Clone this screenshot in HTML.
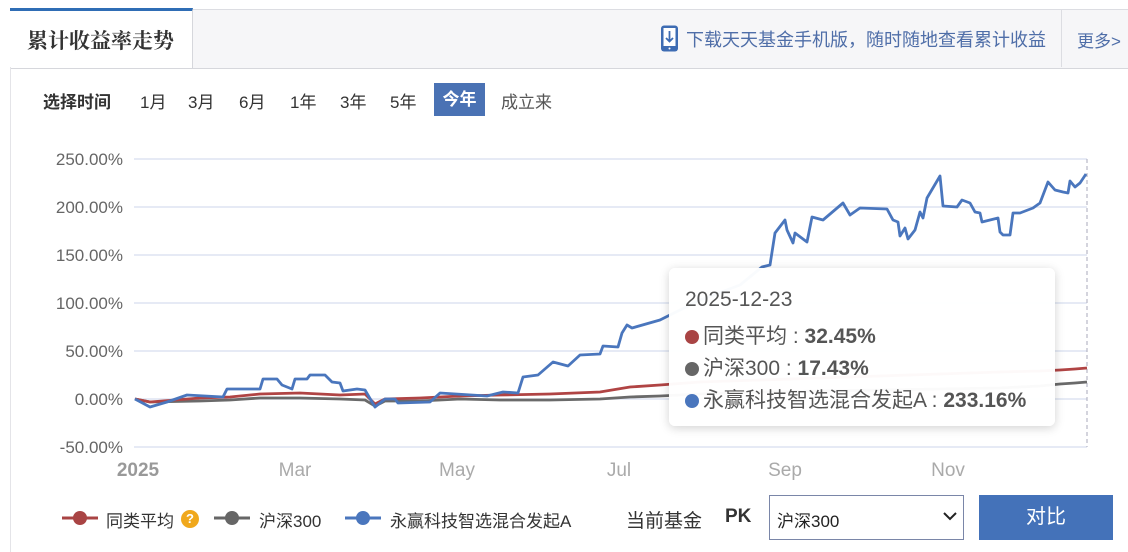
<!DOCTYPE html>
<html><head><meta charset="utf-8"><style>
body{margin:0;width:1128px;height:552px;background:#fff;font-family:"Liberation Sans","Noto Sans CJK SC",sans-serif;position:relative;overflow:hidden}
.a{position:absolute;white-space:nowrap}
.d{display:inline-block;width:14px;height:14px;border-radius:50%;margin-right:4px;vertical-align:-1px}
</style></head><body>
<div class="a" style="left:10px;top:9px;width:1118px;height:58px;background:#f6f6f8;border-top:1px solid #dcdde2;border-bottom:1px solid #d6d7dc"></div>
<div class="a" style="left:10px;top:8px;width:183px;height:60px;background:#fff;border-top:3px solid #2f6db5;border-right:1px solid #d6d7dc;box-sizing:border-box"></div>
<div class="a" style="left:10px;top:67px;width:1px;height:485px;background:#e4e4e8"></div>
<div class="a" style="left:27px;top:25px;font-size:21px;color:#333;font-family:'Noto Serif CJK SC',serif;font-weight:700">累计收益率走势</div>
<svg class="a" style="left:660px;top:25px" width="19" height="27" viewBox="0 0 19 27"><rect x="1" y="0.5" width="17" height="26" rx="3" fill="#3e6cb3"/><rect x="3.5" y="3" width="12" height="18" fill="#fff"/><path d="M9.5 6v10M6 13l3.5 3.5L13 13" stroke="#3e6cb3" stroke-width="1.8" fill="none"/><circle cx="9.5" cy="23.5" r="1" fill="#fff"/></svg>
<div class="a" style="left:686px;top:26px;font-size:18px;color:#4f6ea8">下载天天基金手机版，随时随地查看累计收益</div>
<div class="a" style="left:1061px;top:9px;width:1px;height:58px;background:#dcdde2"></div>
<div class="a" style="left:1077px;top:27px;font-size:17px;color:#4f6ea8">更多&gt;</div>
<div class="a" style="left:43px;top:88px;font-size:17px;color:#333;font-weight:bold">选择时间</div>
<div class="a" style="left:140px;top:88px;font-size:17px;color:#333">1月</div>
<div class="a" style="left:188px;top:88px;font-size:17px;color:#333">3月</div>
<div class="a" style="left:239px;top:88px;font-size:17px;color:#333">6月</div>
<div class="a" style="left:290px;top:88px;font-size:17px;color:#333">1年</div>
<div class="a" style="left:340px;top:88px;font-size:17px;color:#333">3年</div>
<div class="a" style="left:390px;top:88px;font-size:17px;color:#333">5年</div>
<div class="a" style="left:434px;top:83px;width:51px;height:33px;background:#4a72b4;color:#fff;font-size:17px;line-height:33px;text-align:center;font-weight:bold">今年</div>
<div class="a" style="left:501px;top:88px;font-size:17px;color:#555">成立来</div>
<svg class="a" style="left:0;top:140px" width="1128" height="345" viewBox="0 140 1128 345">
<g stroke="#dde4f2" stroke-width="1.5"><line x1="134" x2="1087" y1="159" y2="159"/><line x1="134" x2="1087" y1="207" y2="207"/><line x1="134" x2="1087" y1="255" y2="255"/><line x1="134" x2="1087" y1="303" y2="303"/><line x1="134" x2="1087" y1="351" y2="351"/><line x1="134" x2="1087" y1="399" y2="399"/><line x1="134" x2="1087" y1="447" y2="447"/></g>
<g font-size="17" fill="#666" text-anchor="end" font-family="Liberation Sans,sans-serif"><text x="123" y="165">250.00%</text><text x="123" y="213">200.00%</text><text x="123" y="261">150.00%</text><text x="123" y="309">100.00%</text><text x="123" y="357">50.00%</text><text x="123" y="405">0.00%</text><text x="123" y="453">-50.00%</text></g>
<g font-size="19" fill="#aaa" text-anchor="middle" font-family="Liberation Sans,sans-serif"><text x="138" y="476" font-weight="bold" fill="#999">2025</text><text x="295" y="476">Mar</text><text x="457" y="476">May</text><text x="619" y="476">Jul</text><text x="785" y="476">Sep</text><text x="948" y="476">Nov</text></g>
<line x1="1087" y1="159" x2="1087" y2="447" stroke="#aab" stroke-dasharray="4,3"/>
<polyline fill="none" stroke="#6a6a6a" stroke-width="2.8" points="135,399 150,402 200,401 230,400 260,398 300,398 340,399 365,400 375,406 385,401 420,401 460,399 500,400 550,400 600,399 630,397 660,396 700,394 760,392 820,391 880,390 940,389 1000,388 1040,386 1060,384 1075,383 1087,382"/>
<polyline fill="none" stroke="#b04444" stroke-width="2.8" points="135,399 150,402 200,398 230,397 260,394 300,393 340,395 365,394 375,404 385,399 420,398 460,396 500,395 550,394 600,392 630,387 660,385 700,382 760,380 820,378 880,376 940,374 1000,372 1040,371 1060,370 1075,369 1087,368"/>
<polyline fill="none" stroke="#4a76bd" stroke-width="2.8" stroke-linejoin="round" points="135,399 150,407 167,402 187,395 223,397 227,389 260,389 263,379 277,379 282,385 292,389 295,379 307,379 310,375 325,375 332,382 340,383 343,391 357,389 365,390 375,407 385,399 395,399 398,403 430,402 440,393 487,396 503,392 518,393 523,377 538,375 553,362 568,366 580,355 600,354 603,346 618,347 622,333 627,325 632,328 660,320 700,300 740,285 762,267 770,265 775,233 785,220 787,230 793,243 795,233 807,242 812,217 823,220 843,203 850,215 860,208 887,209 893,220 898,222 900,236 905,228 908,239 915,230 920,212 923,218 927,198 940,176 943,206 957,207 962,200 970,203 975,212 980,213 982,222 998,218 1000,232 1003,235 1010,235 1013,213 1020,213 1033,208 1040,203 1048,182 1055,190 1063,192 1068,193 1070,181 1075,187 1080,183 1086,174"/>
</svg>
<div class="a" style="left:669px;top:268px;width:386px;height:158px;background:rgba(255,255,255,0.97);border-radius:6px;box-shadow:0 2px 10px rgba(0,0,0,0.18)"></div>
<div class="a" style="left:685px;top:288px;font-size:21px;color:#555">2025-12-23</div>
<div class="a" style="left:685px;top:320px;font-size:21px;color:#555"><span class="d" style="background:#a94444"></span>同类平均 : <b>32.45%</b></div>
<div class="a" style="left:685px;top:352px;font-size:21px;color:#555"><span class="d" style="background:#666"></span>沪深300 : <b>17.43%</b></div>
<div class="a" style="left:685px;top:384px;font-size:21px;color:#555"><span class="d" style="background:#4a76bd"></span>永赢科技智选混合发起A : <b>233.16%</b></div>
<svg class="a" style="left:62px;top:508px" width="40" height="20"><line x1="0" y1="10" x2="36" y2="10" stroke="#a94444" stroke-width="3"/><circle cx="18" cy="10" r="7" fill="#a94444"/></svg>
<div class="a" style="left:106px;top:507px;font-size:17px;color:#333">同类平均</div>
<div class="a" style="left:181px;top:510px;width:18px;height:18px;border-radius:50%;background:#f0a81c;color:#fff;font-size:13px;line-height:18px;text-align:center;font-weight:bold">?</div>
<svg class="a" style="left:214px;top:508px" width="40" height="20"><line x1="0" y1="10" x2="36" y2="10" stroke="#666" stroke-width="3"/><circle cx="18" cy="10" r="7" fill="#666"/></svg>
<div class="a" style="left:259px;top:507px;font-size:17px;color:#333">沪深300</div>
<svg class="a" style="left:345px;top:508px" width="40" height="20"><line x1="0" y1="10" x2="36" y2="10" stroke="#4a76bd" stroke-width="3"/><circle cx="18" cy="10" r="7" fill="#4a76bd"/></svg>
<div class="a" style="left:390px;top:507px;font-size:17px;color:#333">永赢科技智选混合发起A</div>
<div class="a" style="left:626px;top:506px;font-size:19px;color:#333">当前基金</div>
<div class="a" style="left:725px;top:506px;font-size:19px;color:#333;font-weight:bold">PK</div>
<div class="a" style="left:769px;top:495px;width:195px;height:45px;border:1px solid #7a86a8;box-sizing:border-box"></div>
<div class="a" style="left:777px;top:507px;font-size:17px;color:#222">沪深300</div>
<svg class="a" style="left:943px;top:512px" width="14" height="10"><path d="M1 1l6 6 6-6" stroke="#222" stroke-width="2" fill="none"/></svg>
<div class="a" style="left:979px;top:495px;width:134px;height:45px;background:#4472b9;color:#fff;font-size:20px;line-height:45px;text-align:center">对比</div>
</body></html>
